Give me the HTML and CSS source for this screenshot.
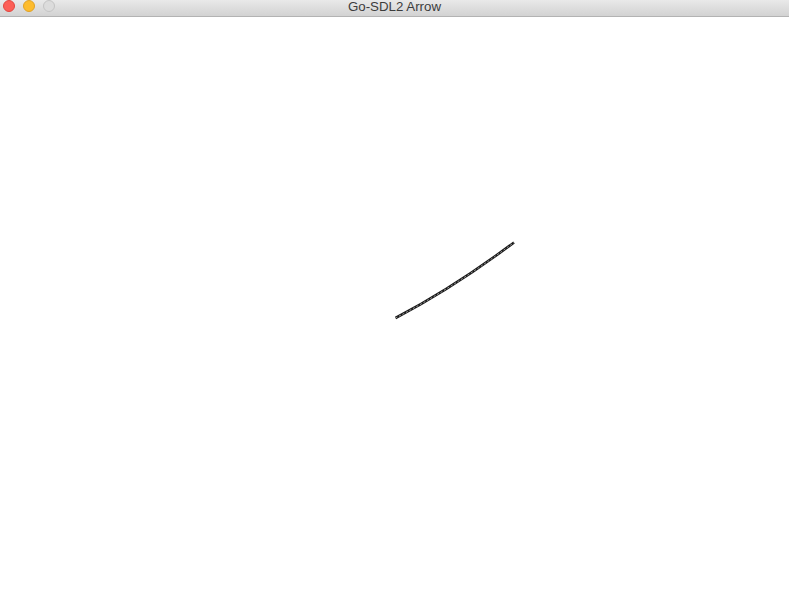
FILE: index.html
```html
<!DOCTYPE html>
<html>
<head>
<meta charset="utf-8">
<title>Go-SDL2 Arrow</title>
<link rel="stylesheet" href="styles.css">
</head>
<body>
<div class="window">
  <div class="titlebar">
    <div class="lights">
      <span class="light red"></span>
      <span class="light yellow"></span>
      <span class="light gray"></span>
    </div>
    <div class="title">Go-SDL2 Arrow</div>
  </div>
  <div class="canvas">
    <svg class="drawing" width="789" height="585" viewBox="0 0 789 585">
      <path d="M395.5 301 Q453 271 514 225.5" fill="none" stroke="#1a1a1a" stroke-width="2.6"/>
      <path d="M395.5 301 Q453 271 514 225.5" fill="none" stroke="#cfcfcf" stroke-width="0.8" stroke-dasharray="2 2"/>
    </svg>
  </div>
</div>
</body>
</html>
```

FILE: styles.css
```css
html, body {
  margin: 0;
  padding: 0;
  background: #ffffff;
}
.window {
  width: 789px;
  height: 602px;
  display: flex;
  flex-direction: column;
  overflow: hidden;
}
.titlebar {
  position: relative;
  height: 16px;
  flex: 0 0 16px;
  background: linear-gradient(#e9e9e9, #d2d2d2);
  border-bottom: 1px solid #b3b3b3;
  display: flex;
  align-items: center;
  justify-content: center;
}
.lights {
  position: absolute;
  left: 3px;
  top: 0px;
  display: flex;
  gap: 8px;
}
.light {
  width: 12px;
  height: 12px;
  border-radius: 50%;
  box-sizing: border-box;
  display: block;
}
.red {
  background: #fc5f57;
  border: 1px solid #e2463f;
}
.yellow {
  background: #fdbc2e;
  border: 1px solid #e0a226;
}
.gray {
  background: #dcdcdc;
  border: 1px solid #c4c4c4;
}
.title {
  font-family: "Liberation Sans", Arial, sans-serif;
  font-size: 13.3px;
  color: #3c3c3c;
  line-height: 14px;
  margin-top: -2px;
}
.canvas {
  flex: 1 1 auto;
  background: #ffffff;
}
.drawing {
  display: block;
}
```
